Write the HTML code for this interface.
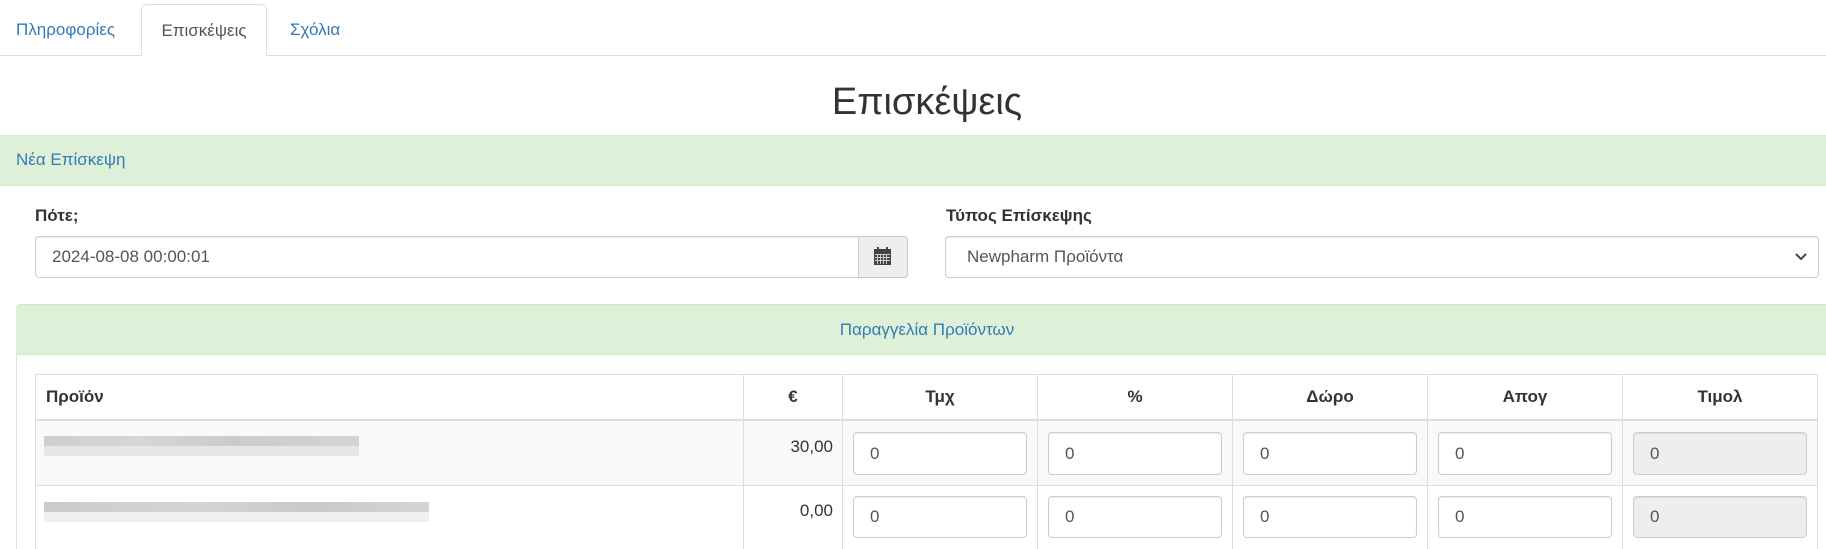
<!DOCTYPE html>
<html><head><meta charset="utf-8"><style>
*{box-sizing:border-box;margin:0;padding:0}
body{width:1826px;height:549px;overflow:hidden;background:#fff;font-family:"Liberation Sans",Arial,sans-serif;font-size:17px;color:#333;position:relative}
.a{position:absolute}
.tabline{left:0;top:55px;width:1826px;height:1px;background:#ddd}
.tab{top:4px;height:52px;line-height:52px;color:#337ab7;font-size:17px}
.act{left:141px;width:126px;border:1px solid #ddd;border-bottom:1px solid #fff;border-radius:5px 5px 0 0;background:#fff;color:#555;text-align:center}
.green{background:#dff0d8;border-top:1px solid #d6e9c6;border-bottom:1px solid #d6e9c6;color:#337ab7}
.inp{border:1px solid #ccc;border-radius:4px;background:#fff;padding-left:16px;color:#555;font-size:17px;box-shadow:inset 0 1px 1px rgba(0,0,0,.075)}
.th{top:374px;height:46px;line-height:46px;font-weight:bold;text-align:center;border-left:1px solid #ddd}
.vl{width:1px;background:#ddd}
.blur{height:10px}
</style></head><body>
<div class="a tabline"></div>
<div class="a tab" style="left:16px">Πληροφορίες</div>
<div class="a tab act">Επισκέψεις</div>
<div class="a tab" style="left:290px">Σχόλια</div>

<div class="a" style="left:14px;width:1826px;top:78px;text-align:center;font-size:38px;line-height:48px;color:#333">Επισκέψεις</div>

<div class="a green" style="left:0;top:135px;width:1826px;height:51px;line-height:48px;padding-left:16px">Νέα Επίσκεψη</div>

<div class="a" style="left:35px;top:205px;font-weight:bold;line-height:22px">Πότε;</div>
<div class="a inp" style="left:35px;top:236px;width:873px;height:42px;line-height:40px">2024-08-08 00:00:01</div>
<div class="a" style="left:858px;top:236px;width:50px;height:42px;background:#eee;border:1px solid #ccc;border-radius:0 4px 4px 0">
<svg width="50" height="42" style="position:absolute;left:-1px;top:-1px"><rect x="16" y="13" width="17" height="16" fill="#444"/><rect x="19" y="11" width="2" height="3" fill="#444"/><rect x="28" y="11" width="2" height="3" fill="#444"/><g fill="#ccc"><rect x="17" y="18" width="15" height="1"/><rect x="17" y="21" width="15" height="1"/><rect x="17" y="24" width="15" height="1"/><rect x="19" y="18" width="1" height="10"/><rect x="22" y="18" width="1" height="10"/><rect x="25" y="18" width="1" height="10"/><rect x="28" y="18" width="1" height="10"/></g></svg></div>

<div class="a" style="left:946px;top:205px;font-weight:bold;line-height:22px">Τύπος Επίσκεψης</div>
<div class="a inp" style="left:945px;top:236px;width:874px;height:42px;line-height:40px;padding-left:21px;color:#555">Newpharm Προϊόντα
<svg class="a" style="right:10px;top:15px" width="14" height="10"><path d="M2 2 L7 7 L12 2" stroke="#444" stroke-width="2" fill="none"/></svg></div>

<div class="a" style="left:16px;top:304px;width:1810px;height:245px;border-left:1px solid #d6e9c6;border-top-left-radius:4px"></div>
<div class="a green" style="left:16px;top:304px;width:1810px;height:51px;line-height:50px;text-align:center;border-top-left-radius:4px"><span style="position:relative;left:6px">Παραγγελία Προϊόντων</span></div>

<!-- table -->
<div class="a" style="left:35px;top:374px;width:1783px;height:175px;border:1px solid #ddd;border-bottom:none"></div>
<div class="a" style="left:36px;top:420px;width:1781px;height:65px;background:#f9f9f9"></div>
<div class="a" style="left:35px;top:419px;width:1783px;height:2px;background:#ddd"></div>
<div class="a" style="left:35px;top:485px;width:1783px;height:1px;background:#ddd"></div>
<div class="a" style="left:46px;top:374px;line-height:46px;font-weight:bold">Προϊόν</div>
<div class="a th" style="left:743px;width:99px">€</div>
<div class="a th" style="left:842px;width:195px">Τμχ</div>
<div class="a th" style="left:1037px;width:195px">%</div>
<div class="a th" style="left:1232px;width:195px">Δώρο</div>
<div class="a th" style="left:1427px;width:195px">Απογ</div>
<div class="a th" style="left:1622px;width:195px">Τιμολ</div>
<div class="a vl" style="left:743px;top:420px;height:129px"></div>
<div class="a vl" style="left:842px;top:420px;height:129px"></div>
<div class="a vl" style="left:1037px;top:420px;height:129px"></div>
<div class="a vl" style="left:1232px;top:420px;height:129px"></div>
<div class="a vl" style="left:1427px;top:420px;height:129px"></div>
<div class="a vl" style="left:1622px;top:420px;height:129px"></div>

<div class="a blur" style="left:44px;top:436px;width:315px;background:linear-gradient(90deg,#cfcdd0,#d6d6d8 30%,#cbcacc 60%,#d4d4d6)"></div>
<div class="a blur" style="left:44px;top:446px;width:315px;background:#e6e6e8"></div>
<div class="a blur" style="left:44px;top:502px;width:385px;background:linear-gradient(90deg,#cccacd,#d4d4d6 40%,#c9c8ca 70%,#d5d5d7)"></div>
<div class="a blur" style="left:44px;top:512px;width:385px;background:#f0f0f2"></div>

<div class="a" style="left:743px;width:90px;top:436px;text-align:right;line-height:22px">30,00</div>
<div class="a" style="left:743px;width:90px;top:500px;text-align:right;line-height:22px">0,00</div>

<div class="a inp" style="left:853px;top:432px;width:174px;height:43px;line-height:41px">0</div>
<div class="a inp" style="left:1048px;top:432px;width:174px;height:43px;line-height:41px">0</div>
<div class="a inp" style="left:1243px;top:432px;width:174px;height:43px;line-height:41px">0</div>
<div class="a inp" style="left:1438px;top:432px;width:174px;height:43px;line-height:41px">0</div>
<div class="a inp" style="left:1633px;top:432px;width:174px;height:43px;line-height:41px;background:#eee">0</div>

<div class="a inp" style="left:853px;top:496px;width:174px;height:42px;line-height:40px">0</div>
<div class="a inp" style="left:1048px;top:496px;width:174px;height:42px;line-height:40px">0</div>
<div class="a inp" style="left:1243px;top:496px;width:174px;height:42px;line-height:40px">0</div>
<div class="a inp" style="left:1438px;top:496px;width:174px;height:42px;line-height:40px">0</div>
<div class="a inp" style="left:1633px;top:496px;width:174px;height:42px;line-height:40px;background:#eee">0</div>
</body></html>
